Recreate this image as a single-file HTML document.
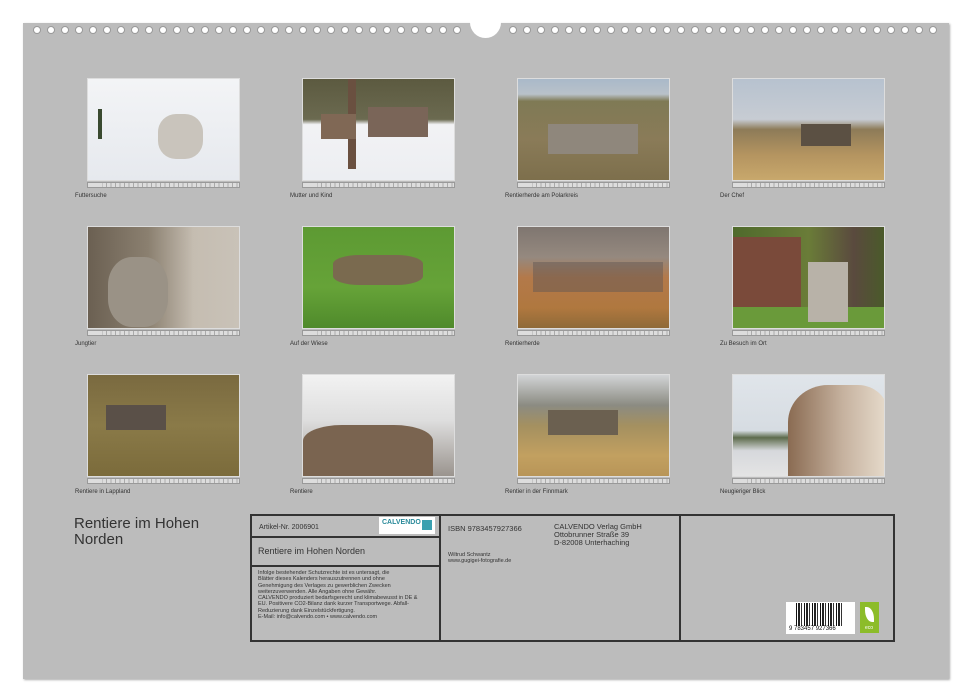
<!DOCTYPE html>
<html><head><meta charset="utf-8"><style>
body{margin:0;width:971px;height:700px;background:#fff;position:relative;overflow:hidden;font-family:"Liberation Sans",sans-serif}
#pg{position:absolute;left:23px;top:23px;width:926px;height:656px;background:#bcbcbc;box-shadow:1px 1px 2px #aaa}
.h{position:absolute;top:4px;width:6px;height:6px;border-radius:50%;background:#fff;box-shadow:0 0 0 1px #999}
.notch{position:absolute;left:447px;top:-16px;width:31px;height:31px;border-radius:50%;background:#fff}
.ph{position:absolute;width:153px;height:103px;border:1px solid #ddd;box-sizing:border-box;overflow:hidden}
.st{position:absolute;width:153px;height:6px;background:repeating-linear-gradient(90deg,#aaa 0 1px,#ddd 1px 4.5px);border:1px solid #999;box-sizing:border-box}
.st:before{content:"";position:absolute;left:0;top:0;width:14px;height:4px;background:#ddd}
.cap{position:absolute;font-size:6px;color:#333}
.box{position:absolute;border:2px solid #333;box-sizing:border-box}
.t{position:absolute;color:#333;white-space:nowrap}
</style></head><body>
<div id="pg"><div class="notch"></div></div>

<!-- row 1 -->
<div class="ph" style="left:87px;top:78px;background:linear-gradient(#f3f4f6,#e6e9ee)"><div style="position:absolute;left:70px;top:35px;width:45px;height:45px;border-radius:40%;background:#c9c4bc"></div><div style="position:absolute;left:10px;top:30px;width:4px;height:30px;background:#3a4a30"></div></div>
<div class="ph" style="left:302px;top:78px;background:linear-gradient(#5c5a40 0,#6b6a50 40%,#f2f2f4 45%,#eceef2)"><div style="position:absolute;left:45px;top:0;width:8px;height:90px;background:#6a5040"></div><div style="position:absolute;left:65px;top:28px;width:60px;height:30px;background:#7a6558"></div><div style="position:absolute;left:18px;top:35px;width:35px;height:25px;background:#806855"></div></div>
<div class="ph" style="left:517px;top:78px;background:linear-gradient(#a9b9c9 0,#b9c1c9 15%,#7f7a55 22%,#8a7b58 60%,#7d6f4c)"><div style="position:absolute;left:30px;top:45px;width:90px;height:30px;background:#8f877c"></div></div>
<div class="ph" style="left:732px;top:78px;background:linear-gradient(#b7c2cf 0,#c7ccd3 40%,#8d7b58 50%,#b49460 75%,#c8a86c)"><div style="position:absolute;left:68px;top:45px;width:50px;height:22px;background:#5b5043"></div></div>
<div class="st" style="left:87px;top:182px"></div><div class="st" style="left:302px;top:182px"></div><div class="st" style="left:517px;top:182px"></div><div class="st" style="left:732px;top:182px"></div>
<div class="cap" style="left:75px;top:193px">Futtersuche</div>
<div class="cap" style="left:290px;top:193px">Mutter und Kind</div>
<div class="cap" style="left:505px;top:193px">Rentierherde am Polarkreis</div>
<div class="cap" style="left:720px;top:193px">Der Chef</div>

<!-- row 2 -->
<div class="ph" style="left:87px;top:226px;background:linear-gradient(90deg,#6b6052,#8b8070 40%,#c5bdb1 70%,#c9c2b8)"><div style="position:absolute;left:20px;top:30px;width:60px;height:70px;border-radius:40%;background:#9a9286"></div></div>
<div class="ph" style="left:302px;top:226px;background:linear-gradient(#5d9a33,#66a338 60%,#4f8a2b)"><div style="position:absolute;left:30px;top:28px;width:90px;height:30px;border-radius:30%;background:#7a6a4f"></div></div>
<div class="ph" style="left:517px;top:226px;background:linear-gradient(#7f7670 0,#95897f 30%,#b3794a 50%,#b0783f 80%,#8f6a38)"><div style="position:absolute;left:15px;top:35px;width:130px;height:30px;background:rgba(90,85,85,.45)"></div></div>
<div class="ph" style="left:732px;top:226px;background:linear-gradient(90deg,#4f6a2c,#6a7c38 50%,#5a4a3e 80%,#4a5a2a)"><div style="position:absolute;left:0;top:10px;width:68px;height:70px;background:#7a4a3a"></div><div style="position:absolute;left:0;top:80px;width:153px;height:23px;background:#6a9a3a"></div><div style="position:absolute;left:75px;top:35px;width:40px;height:60px;background:#b8b2a8"></div></div>
<div class="st" style="left:87px;top:330px"></div><div class="st" style="left:302px;top:330px"></div><div class="st" style="left:517px;top:330px"></div><div class="st" style="left:732px;top:330px"></div>
<div class="cap" style="left:75px;top:341px">Jungtier</div>
<div class="cap" style="left:290px;top:341px">Auf der Wiese</div>
<div class="cap" style="left:505px;top:341px">Rentierherde</div>
<div class="cap" style="left:720px;top:341px">Zu Besuch im Ort</div>

<!-- row 3 -->
<div class="ph" style="left:87px;top:374px;background:linear-gradient(#7a6a40,#8a7a48 50%,#7b6b3b)"><div style="position:absolute;left:18px;top:30px;width:60px;height:25px;background:#5a5048"></div></div>
<div class="ph" style="left:302px;top:374px;background:linear-gradient(#f2f2f2,#dedede 45%,#9a948e)"><div style="position:absolute;left:0;top:50px;width:130px;height:53px;border-radius:30% 30% 0 0;background:#7a6450"></div></div>
<div class="ph" style="left:517px;top:374px;background:linear-gradient(#d2d4d6,#8b8b82 30%,#a49060 50%,#c2a060 80%,#b89558)"><div style="position:absolute;left:30px;top:35px;width:70px;height:25px;background:#6b6050"></div></div>
<div class="ph" style="left:732px;top:374px;background:linear-gradient(#e0e5ea,#d6dce2 55%,#5d6b4c 62%,#d6d8dc 75%,#e4e4e4)"><div style="position:absolute;left:55px;top:10px;width:100px;height:93px;border-radius:40% 30% 0 0;background:linear-gradient(90deg,#8a6b52,#c6b29f 55%,#e7dccd)"></div></div>
<div class="st" style="left:87px;top:478px"></div><div class="st" style="left:302px;top:478px"></div><div class="st" style="left:517px;top:478px"></div><div class="st" style="left:732px;top:478px"></div>
<div class="cap" style="left:75px;top:489px">Rentiere in Lappland</div>
<div class="cap" style="left:290px;top:489px">Rentiere</div>
<div class="cap" style="left:505px;top:489px">Rentier in der Finnmark</div>
<div class="cap" style="left:720px;top:489px">Neugieriger Blick</div>

<div class="t" style="left:74px;top:516px;font-size:15px;line-height:16px">Rentiere im Hohen<br>Norden</div>

<div class="box" style="left:250px;top:514px;width:645px;height:128px"></div>
<div style="position:absolute;left:439px;top:514px;width:2px;height:128px;background:#333"></div>
<div style="position:absolute;left:679px;top:514px;width:2px;height:128px;background:#333"></div>
<div style="position:absolute;left:250px;top:536px;width:190px;height:2px;background:#333"></div>
<div style="position:absolute;left:250px;top:565px;width:190px;height:2px;background:#333"></div>
<div class="t" style="left:259px;top:524px;font-size:7px">Artikel-Nr. 2006901</div>
<div style="position:absolute;left:379px;top:517px;width:56px;height:17px;background:#fff"><div style="position:absolute;left:3px;top:2px;font-size:7px;color:#2a8a9a;font-weight:bold">CALVENDO</div><div style="position:absolute;left:43px;top:3px;width:10px;height:10px;background:#3aa0b0"></div></div>
<div class="t" style="left:258px;top:546px;font-size:9px">Rentiere im Hohen Norden</div>
<div class="t" style="left:258px;top:570px;font-size:5.5px;line-height:6.3px">Infolge bestehender Schutzrechte ist es untersagt, die<br>Blätter dieses Kalenders herauszutrennen und ohne<br>Genehmigung des Verlages zu gewerblichen Zwecken<br>weiterzuverwenden. Alle Angaben ohne Gewähr.<br>CALVENDO produziert bedarfsgerecht und klimabewusst in DE &amp;<br>EU. Positivere CO2-Bilanz dank kurzer Transportwege. Abfall-<br>Reduzierung dank Einzelstückfertigung.<br>E-Mail: info@calvendo.com • www.calvendo.com</div>
<div class="t" style="left:448px;top:524px;font-size:7.5px">ISBN 9783457927366</div>
<div class="t" style="left:554px;top:523px;font-size:7.5px;line-height:8px">CALVENDO Verlag GmbH<br>Ottobrunner Straße 39<br>D-82008 Unterhaching</div>
<div class="t" style="left:448px;top:552px;font-size:5.5px;line-height:6px">Wiltrud Schwantz<br>www.gugigei-fotografie.de</div>
<div style="position:absolute;left:786px;top:602px;width:69px;height:32px;background:#fff"><div style="position:absolute;left:10px;top:1px;width:48px;height:23px;background:repeating-linear-gradient(90deg,#111 0 1px,#fff 1px 2px,#222 2px 4px,#fff 4px 5px,#333 5px 6px,#fff 6px 8px)"></div><div style="position:absolute;left:3px;top:24px;font-size:6px;color:#111">9 783457 927366</div></div>
<div style="position:absolute;left:860px;top:602px;width:19px;height:31px;background:#8cbc2a"><div style="position:absolute;left:5px;top:5px;width:9px;height:15px;background:#fff;border-radius:0 80% 0 80%"></div><div style="position:absolute;left:5px;top:23px;font-size:5px;color:#fff">eco</div></div>
<script>
var pg=document.getElementById('pg');
for(var i=0;i<31;i++){[37,513].forEach(function(s){var d=document.createElement('div');d.className='h';d.style.left=(s+i*14-23-3)+'px';pg.appendChild(d);});}
</script>
</body></html>
